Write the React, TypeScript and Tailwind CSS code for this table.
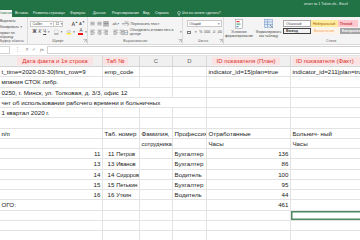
import React from "react";

type Cell = { t?: React.ReactNode; right?: boolean; span?: 1 | 2 | 3 | 4; sel?: boolean };

const spanCls = { 1: "col-span-1", 2: "col-span-2", 3: "col-span-3", 4: "col-span-4" };

const e: Cell = {};

const staff: [number, string, string, number][] = [
  [11, "Петров", "Бухгалтер", 136],
  [13, "Иванов", "Бухгалтер", 86],
  [14, "Сидоров", "Водитель", 100],
  [15, "Петькин", "Бухгалтер", 95],
  [16, "Уткин", "Водитель", 44],
];

const rows: Cell[][] = [
  [{ t: "t_time=2020-03-30|first_row=9" }, { t: "emp_code" }, e, e, { t: "indicator_id=15|plan=true" }, { t: "indicator_id=211|plan=true" }],
  [{ t: "мпания СТОК либр." }, e, e, e, e, e],
  [{ t: "0250, г. Минск, ул. Толковая, д. 3/3, офис 12", span: 3 }, e, e, e],
  [{ t: "чет об использовании рабочего времени и больничных", span: 4 }, e, e],
  [{ t: "1 квартал 2020 г." }, e, e, e, e, e],
  [e, e, e, e, e, e],
  [{ t: "п/п" }, { t: "Таб. номер" }, { t: "Фамилия," }, { t: "Профессия" }, { t: "Отработанные" }, { t: "Больнич- ный" }],
  [e, e, { t: <span className="text-[5.8px]">сотрудника</span> }, e, { t: "Часы" }, { t: "Часы" }],
  ...staff.map(([n, name, job, h]): Cell[] => [
    { t: n, right: true },
    {
      t: (
        <>
          <span className="inline-block w-[10px] text-right">{n}</span>{" "}
          <span className="text-[5.8px] tracking-[-0.1px]">{name}</span>
        </>
      ),
    },
    e,
    { t: job },
    { t: h, right: true },
    e,
  ]),
  [{ t: "ОГО:" }, e, e, e, { t: "461", right: true }, e],
  [e, e, e, e, e, { sel: true }],
  [e, e, e, e, e, e],
  [e, e, e, e, e, e],
];

const tabs: [string, string][] = [
  ["Вставка", "w-[18px]"],
  ["Разметка страницы", "w-[37px]"],
  ["Формулы", "w-[23px]"],
  ["Данные", "w-[19px]"],
  ["Рецензирование", "w-[31px]"],
  ["Вид", "w-[12px]"],
  ["Справка", "w-[22px]"],
];

function Caret() {
  return <span className="text-[3px] text-[#777] ml-[1px]">▼</span>;
}

function Launcher() {
  return (
    <svg width="4" height="4" viewBox="0 0 4 4" className="shrink-0">
      <path d="M0.5 0.5h3v3M1 3l2.5-2.5" stroke="#888" strokeWidth="0.5" fill="none" />
    </svg>
  );
}

function Lines({ kind }: { kind: "l" | "c" | "r" | "t" }) {
  const d =
    kind === "l"
      ? "M0.5 1h5M0.5 2.5h3.5M0.5 4h5M0.5 5.5h3.5"
      : kind === "c"
      ? "M0.5 1h5M1.5 2.5h3M0.5 4h5M1.5 5.5h3"
      : kind === "r"
      ? "M0.5 1h5M2 2.5h3.5M0.5 4h5M2 5.5h3.5"
      : "M0.5 1h5M0.5 2.5h5M0.5 4h5";
  return (
    <svg width="6" height="6" viewBox="0 0 6 6">
      <path d={d} stroke="#666" strokeWidth="0.6" />
    </svg>
  );
}

function Ribbon() {
  return (
    <div className="flex h-[28px] bg-[#f4f4f4] border-b border-[#d9d9d9] text-[3.5px] text-[#444] leading-[4px]">
      {/* Буфер обмена */}
      <div className="w-[30px] flex flex-col border-r border-[#dcdcdc]">
        <div className="h-[21px] flex flex-col pt-[2px] gap-[2px]">
          <div className="h-[4px]">Вырезать</div>
          <div className="h-[4px] flex items-center">
            Копировать
            <Caret />
          </div>
          <div className="h-[4px]">ормат по образцу</div>
        </div>
        <div className="h-[6px] flex items-center text-[#666]">Буфер обмена</div>
      </div>

      {/* Шрифт */}
      <div className="w-[60px] flex flex-col border-r border-[#dcdcdc]">
        <div className="h-[21px] flex flex-col pt-[3px] pl-[2px] gap-[2px]">
          <div className="flex items-center h-[7px]">
            <div className="w-[24px] h-[6px] bg-white border border-[#c9c9c9] flex items-center justify-between px-[1px]">
              <span>Calibri</span>
              <Caret />
            </div>
            <div className="w-[9px] h-[6px] bg-white border border-l-0 border-[#c9c9c9] flex items-center justify-between px-[1px]">
              <span>11</span>
              <Caret />
            </div>
            <span className="ml-[8px] text-[5px] font-bold text-[#555]">A</span>
            <span className="text-[3px] -mt-[3px]">▲</span>
            <span className="ml-[1px] text-[4px] font-bold text-[#555]">A</span>
            <span className="text-[3px] -mt-[3px]">▼</span>
          </div>
          <div className="flex items-center h-[6px] text-[4.5px] text-[#444]">
            <span className="ml-[2px] font-bold">Ж</span>
            <span className="ml-[2px] italic">К</span>
            <span className="ml-[2px] underline">Ч</span>
            <Caret />
            <svg width="6" height="6" viewBox="0 0 6 6" className="ml-[4px]">
              <rect x="0.5" y="0.5" width="5" height="5" fill="none" stroke="#999" strokeWidth="0.5" strokeDasharray="0.8 0.5" />
              <path d="M0.5 5.5h5" stroke="#444" strokeWidth="0.7" />
            </svg>
            <Caret />
            <svg width="7" height="6" viewBox="0 0 7 6" className="ml-[3px]">
              <path d="M1.5 2.5l2-2 2 2-2 2z" fill="none" stroke="#666" strokeWidth="0.5" />
              <rect x="0.5" y="4.6" width="6" height="1.4" fill="#ffe400" />
            </svg>
            <Caret />
            <span className="ml-[3px] flex flex-col items-center leading-[4px]">
              <span className="text-[4.5px]">A</span>
              <span className="w-[5px] h-[1.2px] bg-[#e11]" />
            </span>
            <Caret />
          </div>
        </div>
        <div className="h-[6px] flex items-center justify-between text-[#666]">
          <span className="flex-1 text-center pl-[4px]">Шрифт</span>
          <Launcher />
        </div>
      </div>

      {/* Выравнивание */}
      <div className="w-[100px] flex flex-col border-r border-[#dcdcdc]">
        <div className="h-[21px] flex pt-[3px] pl-[2px]">
          <div className="flex flex-col gap-[2px] w-[34px]">
            <div className="flex items-center h-[7px] gap-[1px]">
              <Lines kind="t" />
              <Lines kind="t" />
              <div className="bg-[#d4d4d4] flex items-center">
                <Lines kind="t" />
              </div>
              <span className="ml-[3px] text-[3.5px] italic">ab↗</span>
              <Caret />
            </div>
            <div className="flex items-center h-[6px] gap-[1px]">
              <Lines kind="l" />
              <Lines kind="c" />
              <Lines kind="r" />
              <span className="ml-[2px]" />
              <Lines kind="l" />
              <Lines kind="r" />
            </div>
          </div>
          <div className="flex flex-col gap-[2px]">
            <div className="flex items-center h-[7px] gap-[1px]">
              <svg width="5" height="5" viewBox="0 0 5 5">
                <path d="M0.5 1h4M0.5 2.5h3.5a0.8 0.8 0 0 1 0 1.6h-1M0.5 4h1" stroke="#666" strokeWidth="0.5" fill="none" />
              </svg>
              <span>Переносить текст</span>
            </div>
            <div className="flex items-center h-[6px] gap-[1px]">
              <svg width="5" height="5" viewBox="0 0 5 5">
                <rect x="0.5" y="0.5" width="4" height="4" fill="none" stroke="#666" strokeWidth="0.5" />
                <path d="M1 2.5h3" stroke="#2a7ad5" strokeWidth="0.5" />
              </svg>
              <span>Объединить и поместить в центре</span>
              <Caret />
            </div>
          </div>
        </div>
        <div className="h-[6px] flex items-center justify-between text-[#666]">
          <span className="flex-1 text-center pl-[4px]">Выравнивание</span>
          <Launcher />
        </div>
      </div>

      {/* Число */}
      <div className="w-[43px] flex flex-col border-r border-[#dcdcdc]">
        <div className="h-[21px] flex flex-col pt-[3px] pl-[4px] gap-[2px]">
          <div className="w-[35px] h-[7px] bg-white border border-[#c9c9c9] flex items-center justify-between px-[1px]">
            <span>Общий</span>
            <Caret />
          </div>
          <div className="flex items-center h-[6px] gap-[2px] text-[3.5px]">
            <span className="w-[4px] h-[3px] border border-[#777]" />
            <Caret />
            <span>%</span>
            <span>000</span>
            <span>,0</span>
            <span>,00</span>
          </div>
        </div>
        <div className="h-[6px] flex items-center justify-between text-[#666]">
          <span className="flex-1 text-center pl-[4px]">Число</span>
          <Launcher />
        </div>
      </div>

      {/* Стили */}
      <div className="flex-1 flex flex-col">
        <div className="h-[21px] flex">
          <div className="w-[30px] flex flex-col items-center pt-[2px]">
            <svg width="9" height="10" viewBox="0 0 9 10">
              <rect x="0.5" y="0.5" width="7" height="9" fill="#fff" stroke="#888" strokeWidth="0.5" />
              <rect x="1.5" y="2" width="3" height="1.2" fill="#d33" />
              <rect x="1.5" y="4.5" width="4" height="1.2" fill="#4a8" />
              <rect x="1.5" y="7" width="2" height="1.2" fill="#48c" />
            </svg>
            <span className="mt-[2px] text-center leading-[3.5px]">
              Условное
              <br />
              форматирование
            </span>
          </div>
          <div className="w-[29px] flex flex-col items-center pt-[2px]">
            <svg width="10" height="10" viewBox="0 0 10 10">
              <rect x="0.5" y="0.5" width="8" height="8" fill="#dbe8f6" stroke="#6b8fc0" strokeWidth="0.5" />
              <path d="M0.5 3h8M0.5 5.5h8M3.5 0.5v8" stroke="#6b8fc0" strokeWidth="0.5" />
              <path d="M6 6l3 3" stroke="#777" strokeWidth="0.8" />
            </svg>
            <span className="mt-[2px] text-center leading-[3.5px]">
              Форматировать
              <br />
              как таблицу
            </span>
          </div>
          <div className="flex flex-col pt-[3px] gap-[1px]">
            <div className="flex h-[7px]">
              <div className="w-[28px] bg-white border border-[#a8a8a8] pl-[2px] flex items-center">Обычный</div>
              <div className="w-[27px] bg-[#ffeb9c] text-[#9c5700] pl-[2px] flex items-center">Нейтральный</div>
              <div className="w-[20px] bg-[#ffc7ce] text-[#9c0006] pl-[2px] flex items-center">Плохой</div>
            </div>
            <div className="flex h-[6px]">
              <div className="w-[28px] bg-[#f2f2f2] border border-[#3f3f3f] text-[#3f3f3f] font-bold pl-[2px] flex items-center">Вывод</div>
              <div className="w-[27px] bg-[#fdf3e6] text-[#f3a863] pl-[2px] flex items-center ml-[1px]">Вычисление</div>
              <div className="w-[20px] bg-[#a5a5a5] text-white font-bold pl-[2px] flex items-center ml-[1px]">Контрольная</div>
            </div>
          </div>
        </div>
        <div className="h-[6px] pl-[102px] flex items-center text-[#666]">Стили</div>
      </div>
    </div>
  );
}

function HeadBox({ children, className }: { children: React.ReactNode; className: string }) {
  return (
    <div className={`h-[8px] bg-[#fbe3e3] text-[#d9342f] flex items-center justify-center whitespace-nowrap ${className}`}>
      {children}
    </div>
  );
}

export default function App() {
  return (
    <div className="w-[360px] h-[240px] overflow-hidden bg-white font-['Liberation_Sans',Arial,sans-serif]">
      {/* title bar */}
      <div className="h-[9px] bg-[#217346] flex items-center pl-[304px] text-[3.5px] text-[#e6efe9] whitespace-nowrap">
        отчет за 1 Табле.xls - Excel
      </div>
      {/* tabs */}
      <div className="h-[8px] bg-[#217346] flex items-end text-[3.5px] text-[#eef5f0] whitespace-nowrap">
        <div className="w-[12px] h-[7px] bg-[#f4f4f4] text-[#217346] flex items-center justify-end overflow-hidden">
          Главная
        </div>
        <div className="w-[3px]" />
        {tabs.map(([t, w]) => (
          <div key={t} className={`${w} h-[7px] flex items-center`}>
            {t}
          </div>
        ))}
        <div className="h-[7px] flex items-center gap-[1px]">
          <svg width="4" height="5" viewBox="0 0 4 5">
            <circle cx="2" cy="1.8" r="1.4" fill="none" stroke="#eef5f0" strokeWidth="0.5" />
            <path d="M1.4 3.6h1.2M1.5 4.4h1" stroke="#eef5f0" strokeWidth="0.5" />
          </svg>
          <span>Что вы хотите сделать?</span>
        </div>
      </div>

      <Ribbon />

      {/* formula bar */}
      <div className="h-[11px] bg-white flex items-center text-[5px] text-[#666] border-b border-[#e3e3e3]">
        <div className="w-[10px] h-[8px] border border-l-0 border-[#d2d2d2] bg-white" />
        <span className="ml-[5px] text-[#aaa]">⋮</span>
        <span className="ml-[5px] text-[4.5px] text-[#999]">✕</span>
        <span className="ml-[3px] text-[4.5px] text-[#999]">✓</span>
        <span className="ml-[4px] italic font-['Liberation_Serif',serif]">fx</span>
        <div className="ml-[3px] flex-1 h-[8px] border border-r-0 border-[#d2d2d2] bg-white" />
      </div>

      {/* column header row */}
      <div className="grid grid-cols-[103px_37px_33px_34px_84px_80px] h-[11px] bg-[#f0f0f0] border-b border-[#d4d4d4] text-[6px] text-[#666]">
        <div className="border-r border-[#d9d9d9] flex items-center">
          <HeadBox className="ml-[17px] w-[76px]">Дата факта и 1я строка</HeadBox>
        </div>
        <div className="border-r border-[#d9d9d9] flex items-center">
          <HeadBox className="w-[25px]">Таб №</HeadBox>
        </div>
        <div className="border-r border-[#d9d9d9] flex items-center justify-center">C</div>
        <div className="border-r border-[#d9d9d9] flex items-center justify-center">D</div>
        <div className="border-r border-[#d9d9d9] flex items-center">
          <HeadBox className="ml-[5px] w-[68px]">ID показателя (План)</HeadBox>
        </div>
        <div className="flex items-center overflow-hidden">
          <HeadBox className="ml-[2px] w-[78px] justify-start pl-[3px]">ID показателя (Факт)</HeadBox>
        </div>
      </div>

      {/* sheet */}
      <div className="grid grid-cols-[103px_37px_33px_34px_84px_80px] auto-rows-[10.25px] text-[6.2px] leading-[10px] text-[#222]">
        {rows.map((r, ri) =>
          r.map((c, ci) => (
            <div
              key={`${ri}-${ci}`}
              className={`${spanCls[c.span ?? 1]} border-r border-b border-[#e3e3e3] overflow-hidden whitespace-nowrap px-[1.5px] ${
                c.right ? "text-right" : ""
              } ${c.sel ? "shadow-[inset_0_0_0_1.5px_#4d8a62]" : ""}`}
            >
              {c.t}
            </div>
          ))
        )}
      </div>
    </div>
  );
}
